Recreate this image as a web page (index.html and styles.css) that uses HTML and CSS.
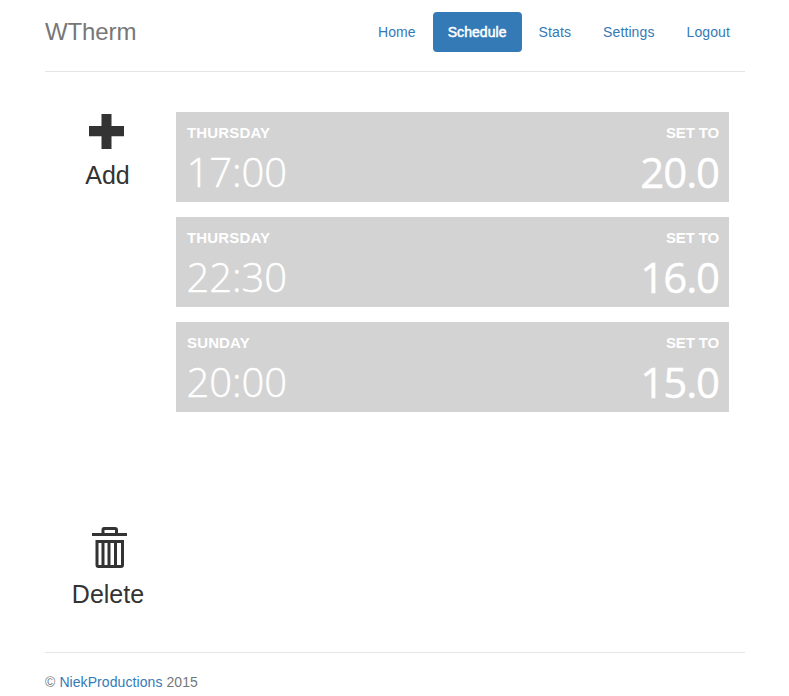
FILE: index.html
```html
<!DOCTYPE html>
<html lang="en">
<head>
<meta charset="utf-8">
<title>WTherm</title>
<link rel="stylesheet" href="styles.css">
</head>
<body>
<div class="container">
  <header class="header">
    <h3 class="brand">WTherm</h3>
    <nav class="nav">
      <a href="#">Home</a>
      <a href="#" class="active">Schedule</a>
      <a href="#">Stats</a>
      <a href="#">Settings</a>
      <a href="#">Logout</a>
    </nav>
  </header>
  <main class="main">
    <aside class="actions">
      <div class="action add">
        <svg width="35" height="35" viewBox="0 0 35 35"><path d="M12.500 0h10v12H35v10.300H22.500V35h-10V22.300H0V12h12.500z"/></svg>
        <span>Add</span>
      </div>
      <div class="action delete">
        <svg width="35" height="41" viewBox="0 0 35 41"><path fill-rule="evenodd" d="M12 0h11q3 0 3 3v3h9v3H0V6h9.500V3q0-3 2.500-3zm.5 3v3H23V3zM3.500 13H32v25q0 3-3 3H6.500q-3 0-3-3zm3 3v22h3V16zm6 0v22h3V16zm6 0v22h3.500V16zm6.500 0v22h4V16z"/></svg>
        <span>Delete</span>
      </div>
    </aside>
    <section class="schedule">
      <div class="item"><div><b>THURSDAY</b><span class="time">17:00</span></div><div class="right"><b>SET TO</b><span class="temp">20.0</span></div></div>
      <div class="item"><div><b>THURSDAY</b><span class="time">22:30</span></div><div class="right"><b>SET TO</b><span class="temp">16.0</span></div></div>
      <div class="item"><div><b class="sunday">SUNDAY</b><span class="time">20:00</span></div><div class="right"><b>SET TO</b><span class="temp">15.0</span></div></div>
    </section>
  </main>
  <footer class="footer">© <a href="#">NiekProductions</a> 2015</footer>
</div>
</body>
</html>
```
FILE: styles.css
```css
* { box-sizing: border-box; }
body { margin: 0; background: #fff; color: #333; font: 14px/20px "Liberation Sans", Arial, sans-serif; }
a { color: #337ab7; text-decoration: none; }
.container { width: 700px; margin-left: 45px; }
.header { display: flex; justify-content: space-between; height: 72px; padding-top: 12px; border-bottom: 1px solid #e5e5e5; }
.brand { margin: 0; font-size: 24px; font-weight: 400; line-height: 40px; letter-spacing: -0.1px; color: #777; }
.nav { display: flex; gap: 2px; }
.nav a { height: 40px; padding: 10px 15px; border-radius: 4px; letter-spacing: 0.11px; }
.nav .active { color: #fff; background: #337ab7; letter-spacing: 0.06px; -webkit-text-stroke: 0.5px #fff; }
.main { display: flex; height: 580px; padding-top: 40px; }
.actions { width: 131px; }
.action { display: flex; flex-direction: column; align-items: center; font-size: 25px; line-height: 28px; }
.action svg { display: block; fill: #333; }
.add { width: 125px; height: 413px; padding-top: 2px; }
.add svg { margin-right: 2px; }
.add span { margin-top: 12px; }
.delete { width: 126px; padding-top: 2px; }
.delete svg { margin-left: 3px; }
.delete span { margin-top: 12px; }
.schedule { width: 553px; display: flex; flex-direction: column; gap: 15px; }
.item { display: flex; justify-content: space-between; height: 90px; padding: 11px 10px 0 11px; background: #d3d3d3; color: #fff; }
.item b, .item span { display: block; }
.item b { font: 700 15px/20px "Liberation Sans", Arial, sans-serif; letter-spacing: 0.15px; }
.item .right b { letter-spacing: -0.15px; }
.item span { font: 300 40px/58px "Open Sans", sans-serif; }
.item .time { margin-left: -0.5px; letter-spacing: -0.1px; -webkit-text-stroke: 0.4px #fff; }
.item .temp { font-size: 42px; font-weight: 400; letter-spacing: -1.1px; -webkit-text-stroke: 0.4px #fff; }
.right { text-align: right; }
.footer { height: 44px; padding-top: 19px; border-top: 1px solid #e5e5e5; color: #777; letter-spacing: 0.08px; }
```
